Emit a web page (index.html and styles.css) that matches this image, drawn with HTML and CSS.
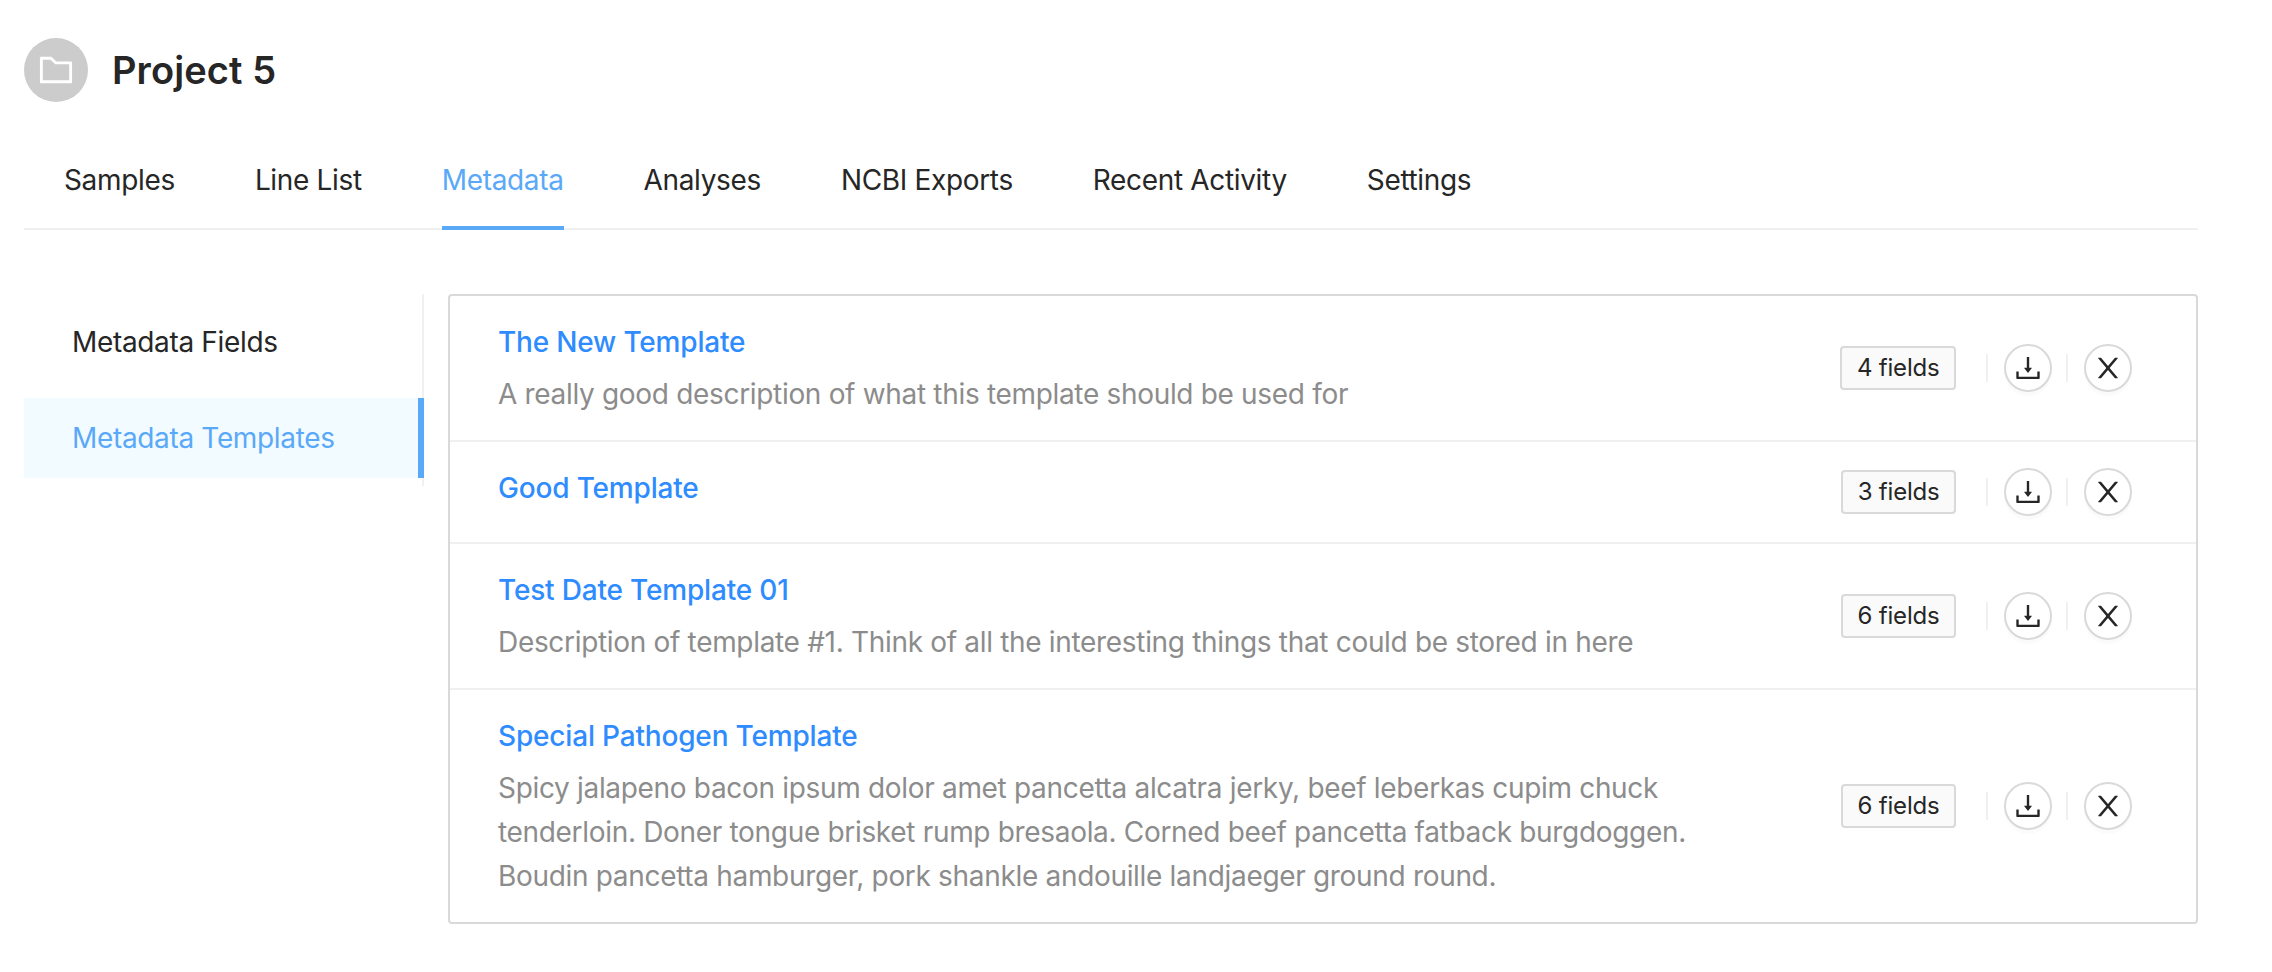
FILE: index.html
```html
<!DOCTYPE html>
<html lang="en">
<head>
  <meta charset="UTF-8" />
  <title>Project 5 - Metadata Templates</title>
  <link rel="stylesheet" href="styles.css">
</head>
<body>
  <header class="project-header">
    <span class="avatar">
      <svg class="icon-folder" viewBox="64 64 896 896" fill="currentColor"><path d="M880 298.4H521L403.7 186.2a8.15 8.15 0 0 0-5.5-2.2H144c-17.7 0-32 14.3-32 32v592c0 17.7 14.3 32 32 32h736c17.7 0 32-14.3 32-32V330.4c0-17.7-14.3-32-32-32zM840 768H184V256h188.5l119.6 114.4H840V768z"/></svg>
    </span>
    <h1>Project 5</h1>
  </header>

  <nav class="tabs">
    <a class="tab">Samples</a>
    <a class="tab">Line List</a>
    <a class="tab active">Metadata</a>
    <a class="tab">Analyses</a>
    <a class="tab">NCBI Exports</a>
    <a class="tab">Recent Activity</a>
    <a class="tab">Settings</a>
  </nav>

  <main class="content">
    <ul class="side-menu">
      <li class="side-item">Metadata Fields</li>
      <li class="side-item selected">Metadata Templates</li>
    </ul>

    <section class="template-list">
      <article class="template">
        <div class="template-meta">
          <a class="template-title">The New Template</a>
          <p class="template-desc">A really good description of what this template should be used for</p>
        </div>
        <ul class="actions">
          <li class="action"><span class="fields-tag">4 fields</span></li>
          <li class="action"><button class="round-btn"><svg viewBox="64 64 896 896" fill="currentColor"><path d="M505.7 661a8 8 0 0 0 12.6 0l112-141.7c4.1-5.2.4-12.9-6.3-12.9h-74.1V168c0-4.4-3.6-8-8-8h-60c-4.4 0-8 3.6-8 8v338.3H400c-6.7 0-10.4 7.6-6.3 12.9l112 141.8zM878 626h-60c-4.4 0-8 3.6-8 8v154H214V634c0-4.4-3.6-8-8-8h-60c-4.4 0-8 3.6-8 8v198c0 17.7 14.3 32 32 32h684c17.7 0 32-14.3 32-32V634c0-4.4-3.6-8-8-8z"/></svg></button></li>
          <li class="action"><button class="round-btn"><svg viewBox="64 64 896 896" fill="currentColor"><path d="M563.8 512l262.5-312.9c4.4-5.2.7-13.1-6.1-13.1h-79.8c-4.7 0-9.2 2.1-12.3 5.7L511.6 449.8 295.1 191.7c-3-3.6-7.5-5.7-12.3-5.7H203c-6.8 0-10.5 7.9-6.1 13.1L459.4 512 196.9 824.9A7.95 7.95 0 0 0 203 838h79.8c4.7 0 9.2-2.1 12.3-5.7l216.5-258.1 216.5 258.1c3 3.6 7.5 5.7 12.3 5.7h79.8c6.8 0 10.5-7.9 6.1-13.1L563.8 512z"/></svg></button></li>
        </ul>
      </article>

      <article class="template">
        <div class="template-meta">
          <a class="template-title">Good Template</a>
        </div>
        <ul class="actions">
          <li class="action"><span class="fields-tag">3 fields</span></li>
          <li class="action"><button class="round-btn"><svg viewBox="64 64 896 896" fill="currentColor"><path d="M505.7 661a8 8 0 0 0 12.6 0l112-141.7c4.1-5.2.4-12.9-6.3-12.9h-74.1V168c0-4.4-3.6-8-8-8h-60c-4.4 0-8 3.6-8 8v338.3H400c-6.7 0-10.4 7.6-6.3 12.9l112 141.8zM878 626h-60c-4.4 0-8 3.6-8 8v154H214V634c0-4.4-3.6-8-8-8h-60c-4.4 0-8 3.6-8 8v198c0 17.7 14.3 32 32 32h684c17.7 0 32-14.3 32-32V634c0-4.4-3.6-8-8-8z"/></svg></button></li>
          <li class="action"><button class="round-btn"><svg viewBox="64 64 896 896" fill="currentColor"><path d="M563.8 512l262.5-312.9c4.4-5.2.7-13.1-6.1-13.1h-79.8c-4.7 0-9.2 2.1-12.3 5.7L511.6 449.8 295.1 191.7c-3-3.6-7.5-5.7-12.3-5.7H203c-6.8 0-10.5 7.9-6.1 13.1L459.4 512 196.9 824.9A7.95 7.95 0 0 0 203 838h79.8c4.7 0 9.2-2.1 12.3-5.7l216.5-258.1 216.5 258.1c3 3.6 7.5 5.7 12.3 5.7h79.8c6.8 0 10.5-7.9 6.1-13.1L563.8 512z"/></svg></button></li>
        </ul>
      </article>

      <article class="template">
        <div class="template-meta">
          <a class="template-title">Test Date Template 01</a>
          <p class="template-desc">Description of template #1. Think of all the interesting things that could be stored in here</p>
        </div>
        <ul class="actions">
          <li class="action"><span class="fields-tag">6 fields</span></li>
          <li class="action"><button class="round-btn"><svg viewBox="64 64 896 896" fill="currentColor"><path d="M505.7 661a8 8 0 0 0 12.6 0l112-141.7c4.1-5.2.4-12.9-6.3-12.9h-74.1V168c0-4.4-3.6-8-8-8h-60c-4.4 0-8 3.6-8 8v338.3H400c-6.7 0-10.4 7.6-6.3 12.9l112 141.8zM878 626h-60c-4.4 0-8 3.6-8 8v154H214V634c0-4.4-3.6-8-8-8h-60c-4.4 0-8 3.6-8 8v198c0 17.7 14.3 32 32 32h684c17.7 0 32-14.3 32-32V634c0-4.4-3.6-8-8-8z"/></svg></button></li>
          <li class="action"><button class="round-btn"><svg viewBox="64 64 896 896" fill="currentColor"><path d="M563.8 512l262.5-312.9c4.4-5.2.7-13.1-6.1-13.1h-79.8c-4.7 0-9.2 2.1-12.3 5.7L511.6 449.8 295.1 191.7c-3-3.6-7.5-5.7-12.3-5.7H203c-6.8 0-10.5 7.9-6.1 13.1L459.4 512 196.9 824.9A7.95 7.95 0 0 0 203 838h79.8c4.7 0 9.2-2.1 12.3-5.7l216.5-258.1 216.5 258.1c3 3.6 7.5 5.7 12.3 5.7h79.8c6.8 0 10.5-7.9 6.1-13.1L563.8 512z"/></svg></button></li>
        </ul>
      </article>

      <article class="template">
        <div class="template-meta">
          <a class="template-title">Special Pathogen Template</a>
          <p class="template-desc">Spicy jalapeno bacon ipsum dolor amet pancetta alcatra jerky, beef leberkas cupim chuck tenderloin. Doner tongue brisket rump bresaola. Corned beef pancetta fatback burgdoggen. Boudin pancetta hamburger, pork shankle andouille landjaeger ground round.</p>
        </div>
        <ul class="actions">
          <li class="action"><span class="fields-tag">6 fields</span></li>
          <li class="action"><button class="round-btn"><svg viewBox="64 64 896 896" fill="currentColor"><path d="M505.7 661a8 8 0 0 0 12.6 0l112-141.7c4.1-5.2.4-12.9-6.3-12.9h-74.1V168c0-4.4-3.6-8-8-8h-60c-4.4 0-8 3.6-8 8v338.3H400c-6.7 0-10.4 7.6-6.3 12.9l112 141.8zM878 626h-60c-4.4 0-8 3.6-8 8v154H214V634c0-4.4-3.6-8-8-8h-60c-4.4 0-8 3.6-8 8v198c0 17.7 14.3 32 32 32h684c17.7 0 32-14.3 32-32V634c0-4.4-3.6-8-8-8z"/></svg></button></li>
          <li class="action"><button class="round-btn"><svg viewBox="64 64 896 896" fill="currentColor"><path d="M563.8 512l262.5-312.9c4.4-5.2.7-13.1-6.1-13.1h-79.8c-4.7 0-9.2 2.1-12.3 5.7L511.6 449.8 295.1 191.7c-3-3.6-7.5-5.7-12.3-5.7H203c-6.8 0-10.5 7.9-6.1 13.1L459.4 512 196.9 824.9A7.95 7.95 0 0 0 203 838h79.8c4.7 0 9.2-2.1 12.3-5.7l216.5-258.1 216.5 258.1c3 3.6 7.5 5.7 12.3 5.7h79.8c6.8 0 10.5-7.9 6.1-13.1L563.8 512z"/></svg></button></li>
        </ul>
      </article>
    </section>
  </main>
</body>
</html>
```

FILE: styles.css
```css
* {
  box-sizing: border-box;
}
body {
  margin: 0;
  padding: 38px 74px 0 24px;
  font-family: Inter, "Noto Sans", sans-serif;
  font-size: 28px;
  line-height: 44px;
  letter-spacing: -0.34px;
  color: #262626;
  background-color: #fff;
}
ul {
  list-style: none;
  margin: 0;
  padding: 0;
}

/* header */
.project-header {
  display: flex;
  align-items: center;
  gap: 24px;
  height: 64px;
}
.project-header h1 {
  margin: 0;
  font-size: 38px;
  line-height: 64px;
  font-weight: 600;
  letter-spacing: 0.1px;
}
.avatar {
  display: flex;
  align-items: center;
  justify-content: center;
  width: 64px;
  height: 64px;
  border-radius: 50%;
  background-color: #ccc;
  color: #fff;
}
.icon-folder {
  width: 36px;
  height: 36px;
}

/* tabs */
.tabs {
  display: flex;
  gap: 80px;
  height: 128px;
  padding: 48px 0 0 40px;
  border-bottom: 2px solid #f0f0f0;
}
.tab {
  height: 80px;
  padding-top: 8px;
}
.tab.active {
  color: #5aa9f8;
  border-bottom: 4px solid #5aa9f8;
}

/* left menu */
.content {
  display: flex;
  align-items: flex-start;
  gap: 24px;
  margin-top: 64px;
}
.side-menu {
  width: 400px;
  flex-shrink: 0;
  padding: 8px 0;
  border-right: 2px solid #f0f0f0;
}
.side-item {
  height: 80px;
  padding-left: 48px;
  line-height: 80px;
  margin-right: -2px;
}
.side-item + .side-item {
  margin-top: 16px;
}
.side-item.selected {
  color: #5aa9f8;
  background-color: #f2fbff;
  border-right: 6px solid #5aa9f8;
}

/* template list */
.template-list {
  flex: 1;
  border: 2px solid #d9d9d9;
  border-radius: 4px;
}
.template {
  display: flex;
  align-items: center;
  padding: 24px 48px;
  border-bottom: 2px solid #f0f0f0;
}
.template:last-child {
  border-bottom: none;
}
.template-meta {
  flex: 1;
}
.template-title {
  display: block;
  margin-bottom: 8px;
  color: #2f8cff;
  font-weight: 500;
  letter-spacing: -0.18px;
}
.template-desc {
  margin: 0;
  max-width: 1240px;
  color: #8c8c8c;
  letter-spacing: -0.32px;
}

/* actions */
.actions {
  display: flex;
  align-items: center;
  margin-left: 48px;
}
.action {
  position: relative;
  display: flex;
  padding: 0 16px;
}
.action:first-child {
  padding: 0 32px 0 0;
}
.action + .action::before {
  content: "";
  position: absolute;
  left: -2px;
  top: 10px;
  width: 2px;
  height: 28px;
  background-color: #f0f0f0;
}
.fields-tag {
  height: 44px;
  padding: 0 14.5px;
  font-size: 24px;
  line-height: 40px;
  letter-spacing: -0.2px;
  background-color: #fafafa;
  border: 2px solid #d9d9d9;
  border-radius: 4px;
}
.round-btn {
  display: flex;
  align-items: center;
  justify-content: center;
  width: 48px;
  height: 48px;
  padding: 0;
  color: #262626;
  background-color: #fff;
  border: 2px solid #d9d9d9;
  border-radius: 50%;
  box-shadow: 0 4px 0 rgba(0, 0, 0, 0.015);
}
.round-btn svg {
  width: 28px;
  height: 28px;
}
```
